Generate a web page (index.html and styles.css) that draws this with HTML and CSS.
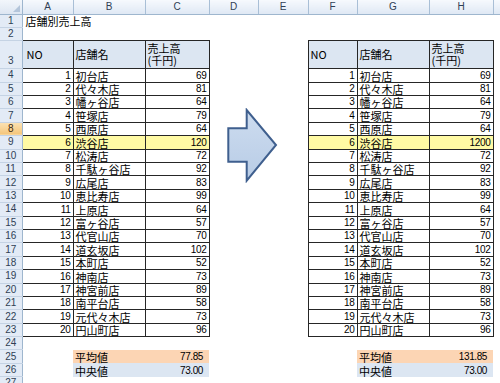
FILE: index.html
```html
<!DOCTYPE html>
<html lang="ja">
<head>
<meta charset="utf-8">
<title>店舗別売上高</title>
<link rel="stylesheet" href="styles.css">
</head>
<body>
<div class="wrap">
<table class="sheet">
<colgroup>
<col class="c-rh"><col class="c-a"><col class="c-b"><col class="c-c"><col class="c-d"><col class="c-e"><col class="c-f"><col class="c-g"><col class="c-h"><col class="c-i">
</colgroup>
<thead>
<tr class="r-ch">
<th class="corner"><span class="tri"></span></th><th class="ch">A</th><th class="ch">B</th><th class="ch">C</th><th class="ch">D</th><th class="ch">E</th><th class="ch">F</th><th class="ch">G</th><th class="ch">H</th><th class="ch"></th>
</tr>
</thead>
<tbody>
<tr><th class="rh">1</th><td class="title">店舗別売上高</td><td></td><td></td><td></td><td></td><td></td><td></td><td></td><td></td></tr>
<tr><th class="rh">2</th><td></td><td></td><td></td><td></td><td></td><td></td><td></td><td></td><td></td></tr>
<tr class="tall"><th class="rh rh-bottom">3</th><td class="t hd txa">NO</td><td class="t hd tx">店舗名</td><td class="t hd tx">売上高<br>(千円)</td><td></td><td></td><td class="t hd tx">NO</td><td class="t hd tx">店舗名</td><td class="t hd tx">売上高<br>(千円)</td><td></td></tr>
<tr><th class="rh">4</th><td class="t num">1</td><td class="t tx">初台店</td><td class="t num">69</td><td></td><td></td><td class="t num">1</td><td class="t tx">初台店</td><td class="t num">69</td><td></td></tr>
<tr><th class="rh">5</th><td class="t num">2</td><td class="t tx">代々木店</td><td class="t num">81</td><td></td><td></td><td class="t num">2</td><td class="t tx">代々木店</td><td class="t num">81</td><td></td></tr>
<tr><th class="rh">6</th><td class="t num">3</td><td class="t tx">幡ヶ谷店</td><td class="t num">64</td><td></td><td></td><td class="t num">3</td><td class="t tx">幡ヶ谷店</td><td class="t num">64</td><td></td></tr>
<tr><th class="rh">7</th><td class="t num">4</td><td class="t tx">笹塚店</td><td class="t num">79</td><td></td><td></td><td class="t num">4</td><td class="t tx">笹塚店</td><td class="t num">79</td><td></td></tr>
<tr><th class="rh sel">8</th><td class="t num">5</td><td class="t tx">西原店</td><td class="t num">64</td><td></td><td></td><td class="t num">5</td><td class="t tx">西原店</td><td class="t num">64</td><td></td></tr>
<tr class="hl"><th class="rh">9</th><td class="t num">6</td><td class="t tx">渋谷店</td><td class="t num">120</td><td></td><td></td><td class="t num">6</td><td class="t tx">渋谷店</td><td class="t num">1200</td><td></td></tr>
<tr><th class="rh">10</th><td class="t num">7</td><td class="t tx">松涛店</td><td class="t num">72</td><td></td><td></td><td class="t num">7</td><td class="t tx">松涛店</td><td class="t num">72</td><td></td></tr>
<tr><th class="rh">11</th><td class="t num">8</td><td class="t tx">千駄ヶ谷店</td><td class="t num">92</td><td></td><td></td><td class="t num">8</td><td class="t tx">千駄ヶ谷店</td><td class="t num">92</td><td></td></tr>
<tr><th class="rh">12</th><td class="t num">9</td><td class="t tx">広尾店</td><td class="t num">83</td><td></td><td></td><td class="t num">9</td><td class="t tx">広尾店</td><td class="t num">83</td><td></td></tr>
<tr><th class="rh">13</th><td class="t num">10</td><td class="t tx">恵比寿店</td><td class="t num">99</td><td></td><td></td><td class="t num">10</td><td class="t tx">恵比寿店</td><td class="t num">99</td><td></td></tr>
<tr><th class="rh">14</th><td class="t num">11</td><td class="t tx">上原店</td><td class="t num">64</td><td></td><td></td><td class="t num">11</td><td class="t tx">上原店</td><td class="t num">64</td><td></td></tr>
<tr><th class="rh">15</th><td class="t num">12</td><td class="t tx">富ヶ谷店</td><td class="t num">57</td><td></td><td></td><td class="t num">12</td><td class="t tx">富ヶ谷店</td><td class="t num">57</td><td></td></tr>
<tr><th class="rh">16</th><td class="t num">13</td><td class="t tx">代官山店</td><td class="t num">70</td><td></td><td></td><td class="t num">13</td><td class="t tx">代官山店</td><td class="t num">70</td><td></td></tr>
<tr><th class="rh">17</th><td class="t num">14</td><td class="t tx">道玄坂店</td><td class="t num">102</td><td></td><td></td><td class="t num">14</td><td class="t tx">道玄坂店</td><td class="t num">102</td><td></td></tr>
<tr><th class="rh">18</th><td class="t num">15</td><td class="t tx">本町店</td><td class="t num">52</td><td></td><td></td><td class="t num">15</td><td class="t tx">本町店</td><td class="t num">52</td><td></td></tr>
<tr><th class="rh">19</th><td class="t num">16</td><td class="t tx">神南店</td><td class="t num">73</td><td></td><td></td><td class="t num">16</td><td class="t tx">神南店</td><td class="t num">73</td><td></td></tr>
<tr><th class="rh">20</th><td class="t num">17</td><td class="t tx">神宮前店</td><td class="t num">89</td><td></td><td></td><td class="t num">17</td><td class="t tx">神宮前店</td><td class="t num">89</td><td></td></tr>
<tr><th class="rh">21</th><td class="t num">18</td><td class="t tx">南平台店</td><td class="t num">58</td><td></td><td></td><td class="t num">18</td><td class="t tx">南平台店</td><td class="t num">58</td><td></td></tr>
<tr><th class="rh">22</th><td class="t num">19</td><td class="t tx">元代々木店</td><td class="t num">73</td><td></td><td></td><td class="t num">19</td><td class="t tx">元代々木店</td><td class="t num">73</td><td></td></tr>
<tr><th class="rh">23</th><td class="t num">20</td><td class="t tx">円山町店</td><td class="t num">96</td><td></td><td></td><td class="t num">20</td><td class="t tx">円山町店</td><td class="t num">96</td><td></td></tr>
<tr><th class="rh">24</th><td></td><td></td><td></td><td></td><td></td><td></td><td></td><td></td><td></td></tr>
<tr><th class="rh">25</th><td></td><td class="avg tx">平均値</td><td class="avg stat">77.85</td><td></td><td></td><td></td><td class="avg tx">平均値</td><td class="avg stat">131.85</td><td></td></tr>
<tr><th class="rh">26</th><td></td><td class="med tx">中央値</td><td class="med stat">73.00</td><td></td><td></td><td></td><td class="med tx">中央値</td><td class="med stat">73.00</td><td></td></tr>
<tr><th class="rh">27</th><td></td><td></td><td></td><td></td><td></td><td></td><td></td><td></td><td></td></tr>
</tbody>
</table>
<svg class="arrow" width="52" height="75" viewBox="0 0 52 75" aria-hidden="true">
<defs>
<linearGradient id="ag" x1="0" y1="0" x2="0" y2="1">
<stop offset="0" stop-color="#cddcef"/>
<stop offset="1" stop-color="#b8cce6"/>
</linearGradient>
</defs>
<polygon points="2.3,20.3 20.7,20.3 20.7,2 50,37 20.7,72.7 20.7,53.7 2.3,53.7" fill="url(#ag)" stroke="#3f5f8e" stroke-width="2" stroke-linejoin="miter"/>
</svg>
</div>
</body>
</html>
```
FILE: styles.css
```css
html, body {
  margin: 0;
  padding: 0;
  background: #ffffff;
  overflow: hidden;
}

.wrap {
  position: relative;
  width: 500px;
  height: 383px;
  overflow: hidden;
}

.sheet {
  table-layout: fixed;
  border-collapse: collapse;
  width: 500px;
  font-family: "Noto Sans CJK JP", "Liberation Sans", sans-serif;
  font-size: 11px;
  color: #000;
}

.c-rh { width: 22px; }
.c-a { width: 51px; }
.c-b { width: 72px; }
.c-c { width: 64px; }
.c-d { width: 49px; }
.c-e { width: 50px; }
.c-f { width: 49px; }
.c-g { width: 72px; }
.c-h { width: 64px; }
.c-i { width: 7px; }

.sheet tr { height: 13.4px; }
.sheet tr.r-ch { height: 14px; }
.sheet tr.tall { height: 28px; }

.sheet td, .sheet th {
  padding: 0;
  line-height: 12px;
  white-space: nowrap;
  vertical-align: bottom;
  overflow: visible;
}

.sheet .ch {
  background: linear-gradient(#f6f9fd, #dfe8f4);
  border-right: 1px solid #a9bfd6;
  border-bottom: 1px solid #9eb6ce;
  font-family: "Liberation Sans", sans-serif;
  font-weight: normal;
  font-size: 10px;
  color: #2f3f55;
  text-align: center;
  vertical-align: middle;
}

.sheet .corner {
  position: relative;
  background: linear-gradient(#f2f6fb, #dde6f2);
  border-right: 1px solid #9eb6ce;
  border-bottom: 1px solid #9eb6ce;
}

.tri {
  position: absolute;
  right: 2px;
  bottom: 2px;
  width: 0;
  height: 0;
  border-left: 7px solid transparent;
  border-bottom: 7px solid #b4c5da;
}

.sheet .rh {
  background: #e3ebf6;
  border-right: 1px solid #9eb6ce;
  border-bottom: 1px solid #c5d3e4;
  font-family: "Liberation Sans", sans-serif;
  font-weight: normal;
  font-size: 10px;
  color: #2f3f55;
  text-align: center;
  vertical-align: middle;
}

.sheet .rh-bottom {
  vertical-align: bottom;
  padding-bottom: 1px;
}

.sheet .rh.sel {
  background: linear-gradient(#fbe2b4, #f4c57a);
  color: #3a2a10;
}

.sheet .title {
  padding-left: 3px;
}

.sheet .t {
  border: 1px solid #262626;
}

.sheet .tx {
  padding-left: 2px;
  text-align: left;
}

.sheet .txa {
  padding-left: 4px;
}

.sheet .hd {
  background: #dce6f2;
  vertical-align: middle;
  line-height: 11.5px;
}

.sheet .num {
  font-family: "Liberation Sans", sans-serif;
  font-size: 10px;
  letter-spacing: -0.3px;
  text-align: right;
  padding-right: 2px;
}

.sheet .hl .t {
  background: #fffaa4;
}

.sheet .avg { background: #fcd5b4; }
.sheet .med { background: #dce6f2; }

.sheet .stat {
  font-family: "Liberation Sans", sans-serif;
  font-size: 10px;
  letter-spacing: -0.4px;
  text-align: right;
  padding-right: 6px;
}

.arrow {
  position: absolute;
  left: 226px;
  top: 108px;
}
```
